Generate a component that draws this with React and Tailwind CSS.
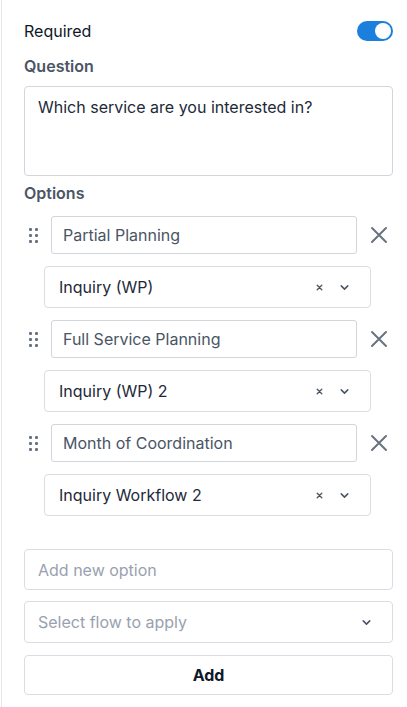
import React, { useState } from 'react';

const ChevronDown = ({ className }) => (
  <svg className={className} viewBox="0 0 12 12" fill="none" stroke="currentColor" strokeWidth="1.4" strokeLinecap="round" strokeLinejoin="round">
    <path d="M3 4.5 6 7.5 9 4.5" />
  </svg>
);

const SmallX = ({ className }) => (
  <svg className={className} viewBox="0 0 12 12" fill="none" stroke="currentColor" strokeWidth="1.4" strokeLinecap="round">
    <path d="M3.5 3.5 8.5 8.5M8.5 3.5 3.5 8.5" />
  </svg>
);

const BigX = () => (
  <svg className="w-[18px] h-[18px] text-gray-500" viewBox="0 0 18 18" fill="none" stroke="currentColor" strokeWidth="2" strokeLinecap="round">
    <path d="M2 2 16 16M16 2 2 16" />
  </svg>
);

const DragHandle = () => (
  <div className="grid grid-cols-2 gap-x-[3px] gap-y-[3px] w-[9px]">
    {[0, 1, 2, 3, 4, 5].map((i) => (
      <span key={i} className="w-[3px] h-[3px] rounded-[1px] bg-gray-500" />
    ))}
  </div>
);

const FlowSelect = ({ value }) => (
  <div className="ml-[20px] mr-[22px] h-[42px] flex items-center border border-gray-300/80 rounded-[4px] pl-[14px] pr-[19px]">
    <span className="flex-1 text-[16px] text-gray-800">{value}</span>
    <SmallX className="w-[11px] h-[11px] text-gray-600 mr-[13px]" />
    <ChevronDown className="w-[13px] h-[13px] text-gray-600" />
  </div>
);

const options = [
  { label: 'Partial Planning', flow: 'Inquiry (WP)' },
  { label: 'Full Service Planning', flow: 'Inquiry (WP) 2' },
  { label: 'Month of Coordination', flow: 'Inquiry Workflow 2' },
];

export default function App() {
  const [required, setRequired] = useState(true);

  return (
    <div className="w-[407px] h-[707px] bg-white" style={{ fontFamily: 'Inter, "Noto Sans", sans-serif' }}>
      <div className="ml-px h-full border-l border-gray-200 pl-[22px] pr-[14px] pt-[21px]">
        <div className="flex items-center justify-between h-5">
          <span className="text-[16px] text-gray-900">Required</span>
          <button
            onClick={() => setRequired(!required)}
            className={`w-9 h-5 rounded-full flex items-center px-[2px] ${required ? 'bg-[#1a7fdd] justify-end' : 'bg-gray-300 justify-start'}`}
          >
            <span className="w-4 h-4 rounded-full bg-white" />
          </button>
        </div>

        <div className="mt-[15px] text-[16px] leading-5 font-semibold text-gray-600">Question</div>
        <div className="mt-[10px] h-[90px] border border-gray-300 rounded-[4px] px-[13px] pt-[9px] text-[16px] leading-[22px] text-gray-800">
          Which service are you interested in?
        </div>

        <div className="mt-[7px] text-[16px] leading-5 font-semibold text-gray-600">Options</div>

        <div className="mt-[13px] flex flex-col gap-3">
          {options.map((opt) => (
            <React.Fragment key={opt.label}>
              <div className="flex items-center">
                <div className="w-[27px] pl-[5px]">
                  <DragHandle />
                </div>
                <div className="flex-1 h-[38px] flex items-center border border-gray-300 rounded-[3px] px-[11px] text-[16px] text-gray-600">
                  {opt.label}
                </div>
                <div className="w-[36px] flex justify-start pl-[13px]">
                  <BigX />
                </div>
              </div>
              <FlowSelect value={opt.flow} />
            </React.Fragment>
          ))}
        </div>

        <div className="mt-[33px] h-[41px] flex items-center border border-gray-300/80 rounded-[4px] px-[13px] text-[16px] text-gray-400">
          Add new option
        </div>
        <div className="mt-[11px] h-[42px] flex items-center border border-gray-300/80 rounded-[4px] pl-[13px] pr-[19px]">
          <span className="flex-1 text-[16px] text-gray-400">Select flow to apply</span>
          <ChevronDown className="w-[13px] h-[13px] text-gray-600" />
        </div>
        <button className="mt-3 w-full h-10 border border-gray-300/80 rounded-[4px] text-[16px] font-bold text-gray-900">
          Add
        </button>
      </div>
    </div>
  );
}
